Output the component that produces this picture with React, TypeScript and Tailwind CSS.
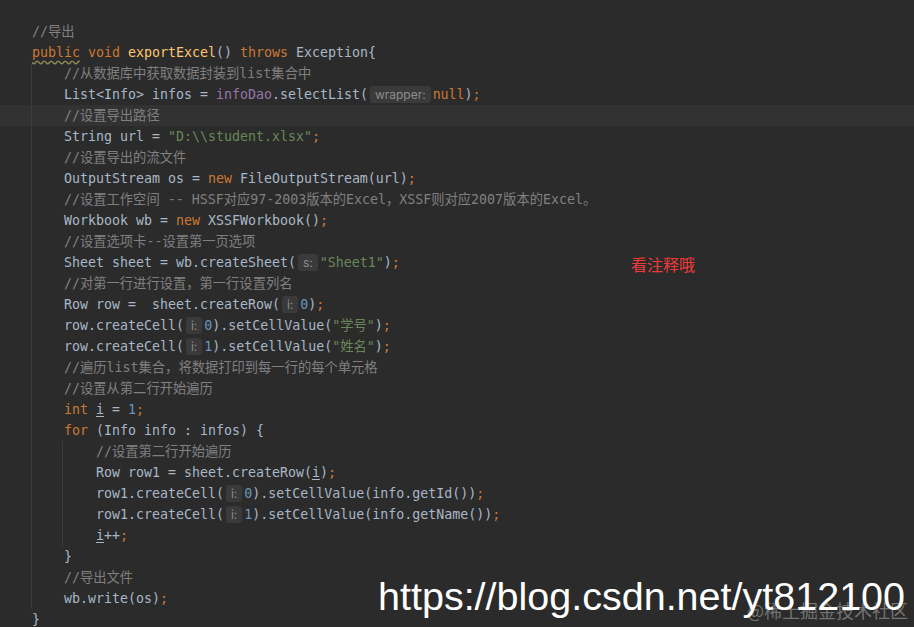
import React from "react";

const K = "text-[#cc7832]";
const CM = "text-[#808080]";
const S = "text-[#6a8759]";
const N = "text-[#6897bb]";
const F = "text-[#ffc66d]";
const P = "text-[#9876aa]";
const PUB = "text-[#cc7832] underline decoration-wavy decoration-[#8c8c58] underline-offset-[3px]";
const UI = "underline underline-offset-[2px]";

type Tok = string | [string, string] | { h: string };
type Line = { ind: 0 | 4 | 8; hl?: boolean; t: Tok[] };

const IND: Record<number, string> = {
  0: "pl-[32px]",
  4: "pl-[64px]",
  8: "pl-[96px]",
};

const lines: Line[] = [
  { ind: 0, t: [["//导出", CM]] },
  { ind: 0, t: [["public", PUB], [" void ", K], ["exportExcel", F], "() ", ["throws", K], " Exception{"] },
  { ind: 4, t: [["//从数据库中获取数据封装到list集合中", CM]] },
  { ind: 4, t: ["List<Info> infos = ", ["infoDao", P], ".selectList(", { h: "wrapper:" }, ["null", K], ")", [";", K]] },
  { ind: 4, hl: true, t: [["//设置导出路径", CM]] },
  { ind: 4, t: ["String url = ", ['"D:\\\\student.xlsx"', S], [";", K]] },
  { ind: 4, t: [["//设置导出的流文件", CM]] },
  { ind: 4, t: ["OutputStream os = ", ["new", K], " FileOutputStream(url)", [";", K]] },
  { ind: 4, t: [["//设置工作空间 -- HSSF对应97-2003版本的Excel，XSSF则对应2007版本的Excel。", CM]] },
  { ind: 4, t: ["Workbook wb = ", ["new", K], " XSSFWorkbook()", [";", K]] },
  { ind: 4, t: [["//设置选项卡--设置第一页选项", CM]] },
  { ind: 4, t: ["Sheet sheet = wb.createSheet(", { h: "s:" }, ['"Sheet1"', S], ")", [";", K]] },
  { ind: 4, t: [["//对第一行进行设置，第一行设置列名", CM]] },
  { ind: 4, t: ["Row row =  sheet.createRow(", { h: "i:" }, ["0", N], ")", [";", K]] },
  { ind: 4, t: ["row.createCell(", { h: "i:" }, ["0", N], ").setCellValue(", ['"学号"', S], ")", [";", K]] },
  { ind: 4, t: ["row.createCell(", { h: "i:" }, ["1", N], ").setCellValue(", ['"姓名"', S], ")", [";", K]] },
  { ind: 4, t: [["//遍历list集合，将数据打印到每一行的每个单元格", CM]] },
  { ind: 4, t: [["//设置从第二行开始遍历", CM]] },
  { ind: 4, t: [["int", K], " ", ["i", UI], " = ", ["1", N], [";", K]] },
  { ind: 4, t: [["for", K], " (Info info : infos) {"] },
  { ind: 8, t: [["//设置第二行开始遍历", CM]] },
  { ind: 8, t: ["Row row1 = sheet.createRow(", ["i", UI], ")", [";", K]] },
  { ind: 8, t: ["row1.createCell(", { h: "i:" }, ["0", N], ").setCellValue(info.getId())", [";", K]] },
  { ind: 8, t: ["row1.createCell(", { h: "i:" }, ["1", N], ").setCellValue(info.getName())", [";", K]] },
  { ind: 8, t: [["i", UI], "++", [";", K]] },
  { ind: 4, t: ["}"] },
  { ind: 4, t: [["//导出文件", CM]] },
  { ind: 4, t: ["wb.write(os)", [";", K]] },
  { ind: 0, t: ["}"] },
];

function Hint({ t }: { t: string }) {
  return (
    <span className="mx-[2px] mt-[2px] inline-flex h-[17px] items-center rounded-[3px] bg-[#3a3a3a] px-[5px] align-top font-['Inter',sans-serif] text-[12px] leading-none text-[#8c8c8c]">
      {t}
    </span>
  );
}

function renderTok(tok: Tok, i: number) {
  if (typeof tok === "string") return <span key={i}>{tok}</span>;
  if (Array.isArray(tok)) return <span key={i} className={tok[1]}>{tok[0]}</span>;
  return <Hint key={i} t={tok.h} />;
}

export default function App() {
  return (
    <div className="relative h-[627px] w-full overflow-hidden bg-[#2b2b2b] pt-[21px] font-['DejaVu_Sans_Mono','Noto_Sans_CJK_SC',monospace] text-[13.29px] text-[#a9b7c6]">
      {lines.map((ln, idx) => (
        <div
          key={idx}
          className={`h-[21px] whitespace-pre leading-[21px] ${IND[ln.ind]} ${ln.hl ? "bg-[#323232]" : ""}`}
        >
          {ln.t.map(renderTok)}
        </div>
      ))}

      {/* indent guides */}
      <div className="absolute left-[31px] top-[63px] h-[546px] w-px bg-[#3b3b3b]" />
      <div className="absolute left-[62px] top-[441px] h-[105px] w-px bg-[#3b3b3b]" />

      {/* annotation */}
      <div className="absolute left-[631px] top-[254px] font-['Noto_Sans_CJK_SC',sans-serif] text-[16px] leading-[20px] text-[#f03a3a]">
        看注释哦
      </div>

      {/* watermarks */}
      <div className="absolute left-[378px] top-[577px] font-['Liberation_Sans',Arial,sans-serif] text-[39.5px] leading-none text-white">
        https://blog.csdn.net/yt812100
      </div>
      <div className="absolute left-[747px] top-[601px] font-['Noto_Sans_CJK_SC',sans-serif] text-[18px] leading-none text-white/35">
        @稀土掘金技术社区
      </div>
    </div>
  );
}
